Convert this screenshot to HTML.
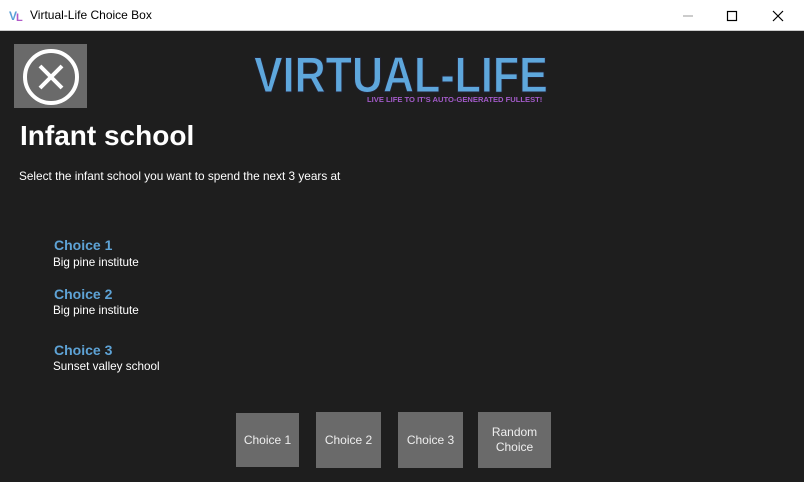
<!DOCTYPE html>
<html><head><meta charset="utf-8"><style>
*{margin:0;padding:0;box-sizing:border-box}
body{width:804px;height:482px;overflow:hidden;background:#1e1e1e;font-family:"Liberation Sans",sans-serif;position:relative}
.tb{position:absolute;left:0;top:0;width:804px;height:31px;background:#fff;border-bottom:1px solid #ccc}
.tb .t{position:absolute;left:30px;top:8px;font-size:12px;color:#000}
.ab{position:absolute;color:#fff}
.btn{position:absolute;background:#6a6a6a;color:#eee;font-size:12px;display:flex;align-items:center;justify-content:center;text-align:center;line-height:15px}
.ch{position:absolute;left:54px;color:#5ea3d6;font-weight:bold;font-size:14px}
.sub{position:absolute;left:53px;color:#fff;font-size:11.7px}
</style></head><body>
<div class="tb">
<svg style="position:absolute;left:9px;top:8px" width="16" height="14"><text x="0" y="12" font-size="12" font-weight="bold" fill="#5aa0d8" font-family="Liberation Sans">V</text><text x="7" y="13" font-size="11" font-weight="bold" fill="#b05ac8" font-family="Liberation Sans">L</text></svg>
<div class="t">Virtual-Life Choice Box</div>
<svg style="position:absolute;left:680px;top:8px" width="110" height="16"><line x1="3" y1="8" x2="13" y2="8" stroke="#999" stroke-width="1"/><rect x="47.5" y="3.5" width="9" height="9" fill="none" stroke="#000" stroke-width="1.2"/><path d="M93 3 L103 13 M103 3 L93 13" stroke="#000" stroke-width="1.2"/></svg>
</div>
<div style="position:absolute;left:14px;top:44px;width:73px;height:64px;background:#6a6a6a"></div>
<svg style="position:absolute;left:14px;top:44px" width="73" height="64"><circle cx="37" cy="33" r="26" fill="none" stroke="#fff" stroke-width="4"/><path d="M26 22 L48 44 M48 22 L26 44" stroke="#fff" stroke-width="4"/></svg>
<div style="position:absolute;left:254px;top:49px;width:400px;font-size:50px;font-weight:900;color:#5ea7dc;line-height:52px;transform:scaleX(0.86);transform-origin:left;-webkit-text-stroke:1px #223">VIRTUAL-LIFE</div>
<div style="position:absolute;left:367px;top:95px;font-size:7.6px;font-weight:bold;color:#a25ac8">LIVE LIFE TO IT'S AUTO-GENERATED FULLEST!</div>
<div class="ab" style="left:20px;top:120px;font-size:28px;font-weight:bold">Infant school</div>
<div class="ab" style="left:19px;top:169px;font-size:11.8px">Select the infant school you want to spend the next 3 years at</div>
<div class="ch" style="top:237px">Choice 1</div><div class="sub" style="top:256px">Big pine institute</div>
<div class="ch" style="top:286px">Choice 2</div><div class="sub" style="top:304px">Big pine institute</div>
<div class="ch" style="top:342px">Choice 3</div><div class="sub" style="top:360px">Sunset valley school</div>
<div class="btn" style="left:236px;top:413px;width:63px;height:54px">Choice 1</div>
<div class="btn" style="left:316px;top:412px;width:65px;height:56px">Choice 2</div>
<div class="btn" style="left:398px;top:412px;width:65px;height:56px">Choice 3</div>
<div class="btn" style="left:478px;top:412px;width:73px;height:56px">Random<br>Choice</div>
</body></html>
